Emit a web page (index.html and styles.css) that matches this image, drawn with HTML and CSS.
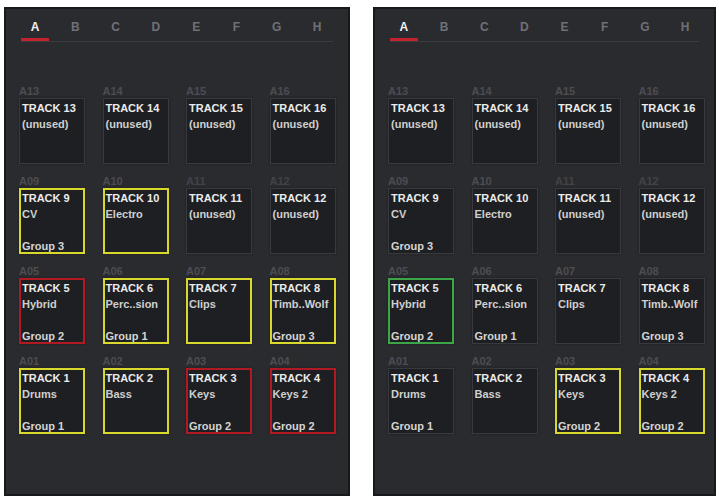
FILE: index.html
```html
<!DOCTYPE html>
<html>
<head>
<meta charset="utf-8">
<link rel="stylesheet" href="styles.css">
</head>
<body>
<div class="wrap">
  <div class="panel left">
    <div class="tabs">
      <div class="tab active">A</div><div class="tab">B</div><div class="tab">C</div><div class="tab">D</div><div class="tab">E</div><div class="tab">F</div><div class="tab">G</div><div class="tab">H</div>
    </div>
    <div class="grid">
      <div class="cell"><div class="lbl">A13</div><div class="pad"><div class="l1">TRACK 13</div><div class="l2">(unused)</div></div></div>
      <div class="cell"><div class="lbl">A14</div><div class="pad"><div class="l1">TRACK 14</div><div class="l2">(unused)</div></div></div>
      <div class="cell"><div class="lbl">A15</div><div class="pad"><div class="l1">TRACK 15</div><div class="l2">(unused)</div></div></div>
      <div class="cell"><div class="lbl">A16</div><div class="pad"><div class="l1">TRACK 16</div><div class="l2">(unused)</div></div></div>

      <div class="cell"><div class="lbl">A09</div><div class="pad yellow"><div class="l1">TRACK 9</div><div class="l2">CV</div><div class="grp">Group 3</div></div></div>
      <div class="cell"><div class="lbl">A10</div><div class="pad yellow"><div class="l1">TRACK 10</div><div class="l2">Electro</div></div></div>
      <div class="cell"><div class="lbl dim">A11</div><div class="pad"><div class="l1">TRACK 11</div><div class="l2">(unused)</div></div></div>
      <div class="cell"><div class="lbl dim">A12</div><div class="pad"><div class="l1">TRACK 12</div><div class="l2">(unused)</div></div></div>

      <div class="cell"><div class="lbl">A05</div><div class="pad red"><div class="l1">TRACK 5</div><div class="l2">Hybrid</div><div class="grp">Group 2</div></div></div>
      <div class="cell"><div class="lbl">A06</div><div class="pad yellow"><div class="l1">TRACK 6</div><div class="l2">Perc..sion</div><div class="grp">Group 1</div></div></div>
      <div class="cell"><div class="lbl">A07</div><div class="pad yellow"><div class="l1">TRACK 7</div><div class="l2">Clips</div></div></div>
      <div class="cell"><div class="lbl">A08</div><div class="pad yellow"><div class="l1">TRACK 8</div><div class="l2">Timb..Wolf</div><div class="grp">Group 3</div></div></div>

      <div class="cell"><div class="lbl">A01</div><div class="pad yellow"><div class="l1">TRACK 1</div><div class="l2">Drums</div><div class="grp">Group 1</div></div></div>
      <div class="cell"><div class="lbl">A02</div><div class="pad yellow"><div class="l1">TRACK 2</div><div class="l2">Bass</div></div></div>
      <div class="cell"><div class="lbl">A03</div><div class="pad red"><div class="l1">TRACK 3</div><div class="l2">Keys</div><div class="grp">Group 2</div></div></div>
      <div class="cell"><div class="lbl">A04</div><div class="pad red"><div class="l1">TRACK 4</div><div class="l2">Keys 2</div><div class="grp">Group 2</div></div></div>
    </div>
  </div>

  <div class="panel right">
    <div class="tabs">
      <div class="tab active">A</div><div class="tab">B</div><div class="tab">C</div><div class="tab">D</div><div class="tab">E</div><div class="tab">F</div><div class="tab">G</div><div class="tab">H</div>
    </div>
    <div class="grid">
      <div class="cell"><div class="lbl">A13</div><div class="pad"><div class="l1">TRACK 13</div><div class="l2">(unused)</div></div></div>
      <div class="cell"><div class="lbl">A14</div><div class="pad"><div class="l1">TRACK 14</div><div class="l2">(unused)</div></div></div>
      <div class="cell"><div class="lbl">A15</div><div class="pad"><div class="l1">TRACK 15</div><div class="l2">(unused)</div></div></div>
      <div class="cell"><div class="lbl">A16</div><div class="pad"><div class="l1">TRACK 16</div><div class="l2">(unused)</div></div></div>

      <div class="cell"><div class="lbl">A09</div><div class="pad"><div class="l1">TRACK 9</div><div class="l2">CV</div><div class="grp">Group 3</div></div></div>
      <div class="cell"><div class="lbl">A10</div><div class="pad"><div class="l1">TRACK 10</div><div class="l2">Electro</div></div></div>
      <div class="cell"><div class="lbl dim">A11</div><div class="pad"><div class="l1">TRACK 11</div><div class="l2">(unused)</div></div></div>
      <div class="cell"><div class="lbl dim">A12</div><div class="pad"><div class="l1">TRACK 12</div><div class="l2">(unused)</div></div></div>

      <div class="cell"><div class="lbl">A05</div><div class="pad green"><div class="l1">TRACK 5</div><div class="l2">Hybrid</div><div class="grp">Group 2</div></div></div>
      <div class="cell"><div class="lbl">A06</div><div class="pad"><div class="l1">TRACK 6</div><div class="l2">Perc..sion</div><div class="grp">Group 1</div></div></div>
      <div class="cell"><div class="lbl">A07</div><div class="pad"><div class="l1">TRACK 7</div><div class="l2">Clips</div></div></div>
      <div class="cell"><div class="lbl">A08</div><div class="pad"><div class="l1">TRACK 8</div><div class="l2">Timb..Wolf</div><div class="grp">Group 3</div></div></div>

      <div class="cell"><div class="lbl">A01</div><div class="pad"><div class="l1">TRACK 1</div><div class="l2">Drums</div><div class="grp">Group 1</div></div></div>
      <div class="cell"><div class="lbl">A02</div><div class="pad"><div class="l1">TRACK 2</div><div class="l2">Bass</div></div></div>
      <div class="cell"><div class="lbl">A03</div><div class="pad yellow"><div class="l1">TRACK 3</div><div class="l2">Keys</div><div class="grp">Group 2</div></div></div>
      <div class="cell"><div class="lbl">A04</div><div class="pad yellow"><div class="l1">TRACK 4</div><div class="l2">Keys 2</div><div class="grp">Group 2</div></div></div>
    </div>
  </div>
</div>
</body>
</html>
```

FILE: styles.css
```css
html, body {
  margin: 0;
  padding: 0;
  background: #ffffff;
}

body {
  font-family: "Liberation Sans", Arial, sans-serif;
}

.wrap {
  display: flex;
  gap: 23px;
  padding: 7px 0 0 4px;
}

.panel {
  box-sizing: border-box;
  height: 489px;
  background: #2a2b2f;
  border: 2px solid #18191b;
}

.panel.left { width: 346px; }
.panel.right { width: 343px; }

.tabs {
  display: flex;
  gap: 12.3px;
  margin: 0 15px;
  padding-top: 11px;
  border-bottom: 1px solid #3b3c40;
}

.tab {
  width: 28px;
  text-align: center;
  font-size: 12px;
  line-height: 14px;
  font-weight: bold;
  color: #6f7176;
  padding-bottom: 4px;
  border-bottom: 3px solid transparent;
}

.tab.active {
  color: #f2f2f2;
  border-bottom-color: #c4212e;
}

.grid {
  display: grid;
  grid-template-columns: repeat(4, 66px);
  column-gap: 17.5px;
  row-gap: 11px;
  margin-top: 43px;
  padding-left: 13px;
}

.lbl {
  font-size: 11px;
  line-height: 12px;
  font-weight: bold;
  color: #4c4d52;
  margin-bottom: 1px;
}

.lbl.dim {
  color: #424348;
}

.pad {
  box-sizing: border-box;
  height: 66px;
  display: flex;
  flex-direction: column;
  background: #1e1f22;
  border: 1px solid #393a3e;
  padding: 1px 2px 1px;
  box-shadow: 0 0 2px rgba(0, 0, 0, 0.35);
  font-size: 11px;
  font-weight: bold;
  color: #e4e4e4;
}

.pad.yellow,
.pad.red,
.pad.green {
  border-width: 2px;
  padding: 0 1px 0;
}

.pad.yellow { border-color: #d9d92b; }
.pad.red { border-color: #b11a22; }
.pad.green { border-color: #3ca646; }

.l1 {
  line-height: 16px;
  color: #ebebeb;
}

.l2 {
  line-height: 16px;
  color: #cfcfcf;
}

.grp {
  margin-top: auto;
  line-height: 12px;
  color: #d4d4d4;
}
```
